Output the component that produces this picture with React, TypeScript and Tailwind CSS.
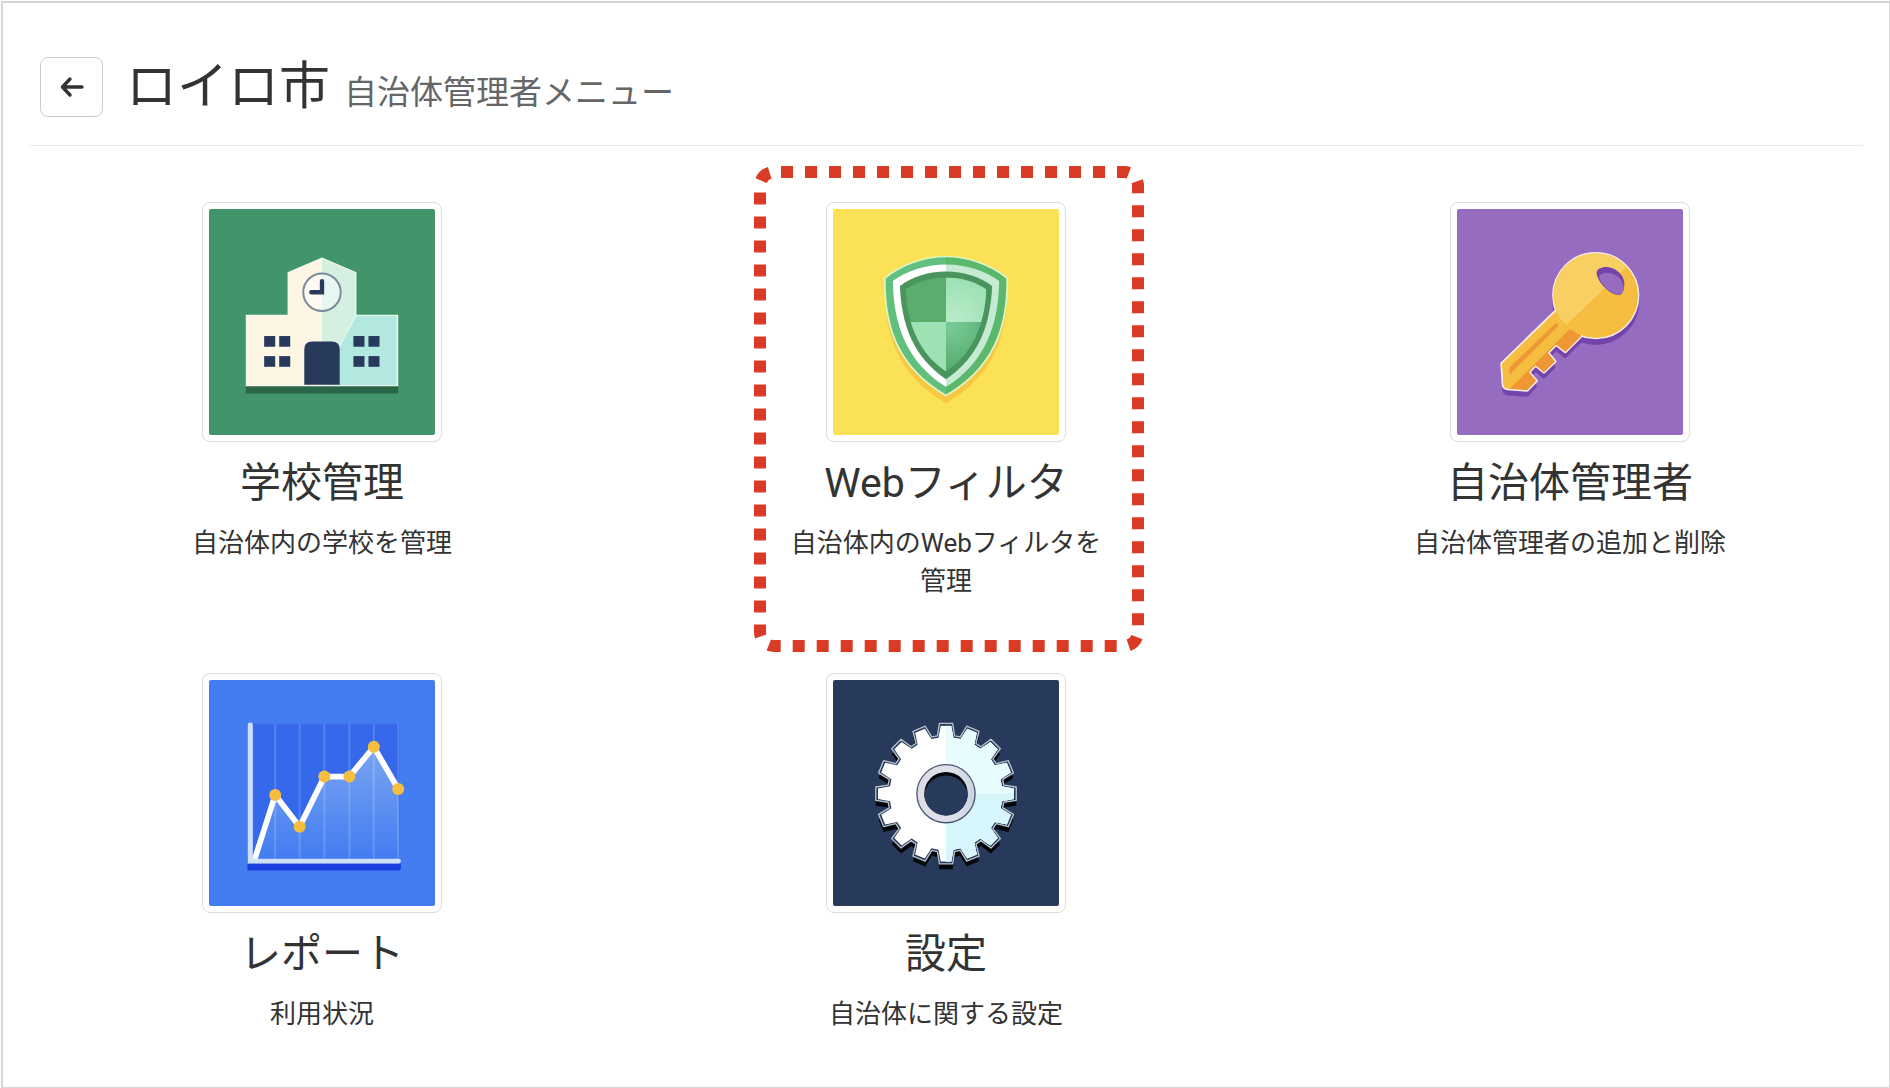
import type { ReactNode } from 'react';

function SchoolIcon() {
  return (
    <svg viewBox="58 57 676 676" className="block w-full rounded-xs" aria-hidden="true">
      <rect x="58" y="57" width="676" height="676" fill="#42946b" />
      <rect x="168" y="584" width="456" height="25" fill="#2b6649" />
      <path d="M168 373H293V246L396 202L499 246V373H624V587H168Z" fill="#f4fbf3" />
      <path d="M171 376H296V248L396 206V584H171Z" fill="#fef6e4" />
      <path d="M396 206L496 248V376L447 472V584H396Z" fill="#d5f0e1" />
      <path d="M499 376H619V584H447V474Z" fill="#b2e8e0" />
      <path d="M396 249A57 57 0 0 0 396 363Z" fill="#fefaf1" />
      <path d="M396 249A57 57 0 0 1 396 363Z" fill="#e8f6f3" />
      <circle cx="396" cy="306" r="56" fill="none" stroke="#7c8b9b" strokeWidth="6" />
      <path d="M396 273V306H364" fill="none" stroke="#283a5c" strokeWidth="13" strokeLinecap="round" />
      <path d="M343 583V477Q343 453 367 453H425Q449 453 449 477V583Z" fill="#283a5c" />
      <g fill="#283a5c">
        <rect x="223" y="437" width="33" height="32" />
        <rect x="268" y="437" width="33" height="32" />
        <rect x="223" y="497" width="33" height="32" />
        <rect x="268" y="497" width="33" height="32" />
        <rect x="490" y="437" width="33" height="32" />
        <rect x="535" y="437" width="33" height="32" />
        <rect x="490" y="497" width="33" height="32" />
        <rect x="535" y="497" width="33" height="32" />
      </g>
    </svg>
  );
}

function ShieldIcon() {
  const outer =
    'M393 199C460 199 530 225 576 264C578 420 530 535 393 615C256 535 208 420 210 264C256 225 326 199 393 199Z';
  const inner = 'M393 262C440 262 482 275 514 298C508 410 470 492 393 543C316 492 278 410 272 298C304 275 346 262 393 262Z';

  return (
    <svg viewBox="55 57 676 676" className="block w-full rounded-xs" aria-hidden="true">
      <defs>
        <linearGradient id="shield-edge">
          <stop offset="50%" stopColor="#62c07e" />
          <stop offset="50%" stopColor="#5ab76b" />
        </linearGradient>
        <linearGradient id="shield-ring">
          <stop offset="50%" stopColor="#ffffff" />
          <stop offset="50%" stopColor="#c5ecd3" />
        </linearGradient>
        <radialGradient id="shield-light" gradientUnits="userSpaceOnUse" cx="420" cy="385" r="120">
          <stop offset="0%" stopColor="#b9ebc9" />
          <stop offset="100%" stopColor="#9de1b4" />
        </radialGradient>
        <radialGradient id="shield-dark" gradientUnits="userSpaceOnUse" cx="410" cy="410" r="130">
          <stop offset="0%" stopColor="#77cb98" />
          <stop offset="100%" stopColor="#57ab6d" />
        </radialGradient>
        <clipPath id="shield-clip">
          <path d={inner} />
        </clipPath>
      </defs>
      <rect x="55" y="57" width="676" height="676" fill="#fae155" />
      <path d={outer} fill="#f7c842" transform="translate(0 23)" />
      <path d={outer} fill="url(#shield-edge)" stroke="#e0f5c8" strokeWidth="5" strokeLinejoin="round" />
      <path
        d="M393 223C455 223 512 243 552 272C550 405 510 515 393 589C276 515 236 405 234 272C274 243 331 223 393 223Z"
        fill="url(#shield-ring)"
      />
      <path
        d="M393 244C448 244 496 261 531 287C526 405 490 500 393 566C296 500 260 405 255 287C290 261 338 244 393 244Z"
        fill="#4a955e"
      />
      <g clipPath="url(#shield-clip)">
        <rect x="260" y="255" width="133" height="140" fill="#5aad6d" />
        <rect x="393" y="255" width="130" height="140" fill="url(#shield-light)" />
        <rect x="260" y="395" width="133" height="160" fill="#9de1b5" />
        <rect x="393" y="395" width="130" height="160" fill="url(#shield-dark)" />
      </g>
    </svg>
  );
}

function KeyIcon() {
  const shaft =
    'M352 358L186 519L190 582Q192 594 203 595L262 599L289 571L267 545L287 524L312 545L345 513L324 487L348 462L376 484L424 436Z';

  return (
    <svg viewBox="52 57 676 676" className="block w-full rounded-xs" aria-hidden="true">
      <defs>
        <clipPath id="key-shaft">
          <path d={shaft} />
        </clipPath>
        <clipPath id="key-head">
          <circle cx="467" cy="316" r="127" />
        </clipPath>
      </defs>
      <rect x="52" y="57" width="676" height="676" fill="#956cc0" />
      <g fill="#7443ab" stroke="#7443ab" strokeWidth="5" strokeLinejoin="round" transform="translate(0 17)">
        <path d={shaft} />
        <circle cx="467" cy="316" r="128" />
      </g>
      <g fill="#f5be40" stroke="#faeee6" strokeWidth="9" strokeLinejoin="round">
        <path d={shaft} />
        <circle cx="467" cy="316" r="126" />
      </g>
      <g clipPath="url(#key-shaft)">
        <path d={shaft} fill="#f5be40" />
        <path d="M205 600L392 414L450 440L300 620Z" fill="#ef9734" />
        <path d="M209 531L347 399Q355 396 355 406L210 552Z" fill="#ef9734" />
      </g>
      <g clipPath="url(#key-head)">
        <circle cx="467" cy="316" r="127" fill="#f5be40" />
        <path d="M379 405L560 228L500 160H320V340Z" fill="#f7cf62" />
      </g>
      <path
        d="M470 244C478 226 518 224 542 252C558 272 554 298 543 312C528 318 508 306 492 290C478 275 468 258 470 244Z"
        fill="#7443ab"
      />
      <path
        d="M476 259C486 242 520 244 538 264C550 276 552 290 550 300C546 311 542 312 538 312C525 313 508 304 494 290C486 281 480 271 476 259Z"
        fill="#956cc0"
      />
    </svg>
  );
}

function ReportIcon() {
  const points = [
    [256, 406],
    [329, 501],
    [403, 351],
    [478, 351],
    [551, 262],
    [624, 388],
  ];
  const line = points.map((p) => p.join(',')).join(' ');

  return (
    <svg viewBox="58 62 676 676" className="block w-full rounded-xs" aria-hidden="true">
      <defs>
        <linearGradient id="report-area" x1="0" y1="0" x2="0" y2="1">
          <stop offset="0%" stopColor="#7ba5f3" />
          <stop offset="100%" stopColor="#427cf0" />
        </linearGradient>
      </defs>
      <rect x="58" y="62" width="676" height="676" fill="#437df0" />
      <rect x="190" y="193" width="438" height="404" fill="#3568ea" />
      <polygon points={`192,597 ${line} 628,597`} fill="url(#report-area)" />
      <g fill="#ffffff" fillOpacity="0.16">
        {points.map(([x]) => (
          <rect key={x} x={x - 3} y="193" width="6" height="404" />
        ))}
      </g>
      <path d="M173 611H632V624Q632 632 624 632H173Z" fill="#1c3fe2" />
      <polyline points={`194,600 ${line}`} fill="none" stroke="#ffffff" strokeWidth="17" />
      <path d="M174 611V196Q174 189 182 189Q189 189 189 196V597H625Q632 597 632 604Q632 611 625 611Z" fill="#cfe0fc" />
      {points.map(([x, y]) => (
        <circle key={x} cx={x} cy={y} r="18" fill="#f5be41" />
      ))}
    </svg>
  );
}

const CX = 393;
const CY = 402;
const TEETH = 16;

function gearPath(tip: number, root: number, tipHalf: number, rootHalf: number) {
  const pts: string[] = [];
  for (let i = 0; i < TEETH; i++) {
    const mid = (i * 360) / TEETH;
    const corners = [
      [root, mid - rootHalf],
      [tip, mid - tipHalf],
      [tip, mid + tipHalf],
      [root, mid + rootHalf],
    ];
    corners.forEach(([r, deg]) => {
      const a = (deg * Math.PI) / 180;
      pts.push(`${(CX + r * Math.sin(a)).toFixed(1)} ${(CY - r * Math.cos(a)).toFixed(1)}`);
    });
  }
  return `M${pts.join('L')}Z`;
}

function GearIcon() {
  const outline = gearPath(211, 175, 5.4, 8.4);
  const body = gearPath(204, 169, 4.4, 7.6);

  return (
    <svg viewBox="55 62 676 676" className="block w-full rounded-xs" aria-hidden="true">
      <defs>
        <linearGradient id="gear-ring">
          <stop offset="0%" stopColor="#dddce6" />
          <stop offset="60%" stopColor="#dfe1ea" />
          <stop offset="100%" stopColor="#c9d3e0" />
        </linearGradient>
        <clipPath id="gear-body">
          <path d={body} />
        </clipPath>
        <clipPath id="gear-hole">
          <circle cx={CX} cy={CY} r="65" />
        </clipPath>
      </defs>
      <rect x="55" y="62" width="676" height="676" fill="#283a5c" />
      <path d={outline} fill="#04060a" transform="translate(0 16)" />
      <path d={outline} fill="#283a5c" stroke="#b9c3cb" strokeWidth="4" strokeLinejoin="round" />
      <g clipPath="url(#gear-body)">
        <rect x="170" y="180" width="446" height="450" fill="#ffffff" />
        <rect x="393" y="180" width="223" height="450" fill="#e8fbfd" />
        <rect x="393" y="402" width="223" height="222" fill="#d6f6fb" />
      </g>
      <circle cx={CX} cy={CY} r="87" fill="url(#gear-ring)" stroke="#4a5875" strokeWidth="4" />
      <circle cx={CX} cy={CY} r="65" fill="#04060a" />
      <circle cx={CX} cy={CY + 12} r="66" fill="#283a5c" clipPath="url(#gear-hole)" />
    </svg>
  );
}

// red dashed frame around the highlighted menu item
function Highlight() {
  return (
    <svg
      width="390"
      height="486"
      viewBox="0 0 390 486"
      className="absolute -top-9 -left-8 max-w-none pointer-events-none"
      aria-hidden="true"
    >
      <path
        d="M27 6H370A14 14 0 0 1 384 20V466A14 14 0 0 1 370 480H20A14 14 0 0 1 6 466V20A14 14 0 0 1 20 6H27"
        fill="none"
        stroke="#da3b26"
        strokeWidth="12"
        strokeDasharray="12 12"
      />
    </svg>
  );
}

interface MenuItem {
  title: string;
  description: string;
  icon: ReactNode;
  highlighted?: boolean;
}

const menuItems: MenuItem[] = [
  { title: '学校管理', description: '自治体内の学校を管理', icon: <SchoolIcon /> },
  {
    title: 'Webフィルタ',
    description: '自治体内のWebフィルタを管理',
    icon: <ShieldIcon />,
    highlighted: true,
  },
  { title: '自治体管理者', description: '自治体管理者の追加と削除', icon: <KeyIcon /> },
  { title: 'レポート', description: '利用状況', icon: <ReportIcon /> },
  { title: '設定', description: '自治体に関する設定', icon: <GearIcon /> },
];

function App() {
  return (
    <div className="min-h-screen flex bg-white pt-px pl-px text-[#333333] font-['Roboto','Noto_Sans_CJK_JP',sans-serif]">
      <div className="flex-1 border-t-2 border-l-2 border-r border-b border-[#d5d7d7]">
        {/* HEADER */}
        <header className="mx-[26px] pt-[54px] pb-7 pl-[11px] flex items-start gap-[23px] border-b border-[#ebebeb]">
          <button
            type="button"
            aria-label="戻る"
            className="w-[63px] h-[60px] flex items-center justify-center rounded-lg border border-[#cccccc] bg-white"
          >
            <svg
              width="24"
              height="24"
              viewBox="0 0 24 24"
              fill="none"
              stroke="#333333"
              strokeWidth="3.4"
              strokeLinecap="round"
              strokeLinejoin="round"
            >
              <path d="M22 12H3M10 4L2.5 12L10 20" />
            </svg>
          </button>
          <h1 className="flex items-baseline gap-3.5 text-[51px] leading-[60px]">
            ロイロ市
            <small className="text-[33px] leading-none text-[#666666]">自治体管理者メニュー</small>
          </h1>
        </header>

        {/* MENU */}
        <ul className="px-[7px] pt-14 grid grid-cols-3 gap-y-[73px]">
          {menuItems.map((item) => (
            <li key={item.title} className="flex justify-center">
              <a href="#" className="relative w-80 flex flex-col items-center text-center">
                <span className="w-60 p-1.5 rounded-lg border border-[#dddddd] bg-white">{item.icon}</span>
                <h2 className="mt-[13px] text-[41px] leading-[56px]">{item.title}</h2>
                <p className="mt-[13px] text-[26px] leading-[38px]">{item.description}</p>
                {item.highlighted && <Highlight />}
              </a>
            </li>
          ))}
        </ul>
      </div>
    </div>
  );
}

export default App;
